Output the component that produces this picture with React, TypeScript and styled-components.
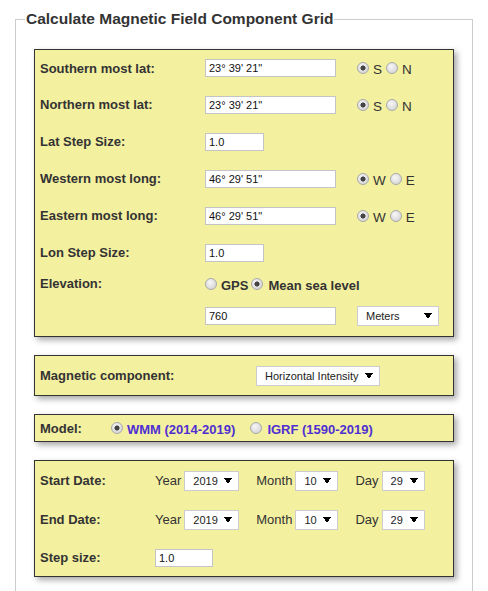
import React from "react";
import styled, { createGlobalStyle } from "styled-components";

const GlobalStyle = createGlobalStyle`
  html, body { margin: 0; padding: 0; background: #fff; }
  body {
    font-family: "Liberation Sans", Arial, Helvetica, sans-serif;
    font-size: 13px;
    color: #333;
  }
  * { box-sizing: border-box; }
`;

const Page = styled.div`
  padding: 10px 15px 0 15px;
`;

const Fieldset = styled.fieldset`
  margin: 0;
  min-width: 0;
  border: 1px solid #ccc;
  padding: 21px 18px 40px;
  display: flex;
  flex-direction: column;
  gap: 18px;
`;

const Legend = styled.legend`
  font-size: 15.5px;
  font-weight: bold;
  color: #333;
  line-height: 18px;
  padding: 0 1px;
  margin-left: -9px;
`;

const Panel = styled.div<{ $cols: string; $rows: string }>`
  background: #f3f0a0;
  border: 1px solid #333;
  box-shadow: 3px 3px 6px rgba(0, 0, 0, 0.35);
  padding: 0 5px;
  display: grid;
  grid-template-columns: ${(p) => p.$cols};
  grid-template-rows: ${(p) => p.$rows};
  align-items: center;
`;

const Label = styled.span`
  font-weight: bold;
  color: #333;
`;

const Cell = styled.div<{ $gap?: number; $span?: number }>`
  display: flex;
  align-items: center;
  gap: ${(p) => p.$gap ?? 4}px;
  grid-column: span ${(p) => p.$span ?? 1};
`;

const TextInput = styled.input<{ $w: number }>`
  width: ${(p) => p.$w}px;
  height: 18px;
  margin: 0;
  padding: 0 0 0 3px;
  border: 1px solid #c4c4c4;
  border-radius: 0;
  background: #fff;
  font: 11px "Liberation Sans", Arial, sans-serif;
  color: #111;
  outline: none;
`;

const Select = styled.select<{ $w: number }>`
  appearance: none;
  -webkit-appearance: none;
  width: ${(p) => p.$w}px;
  height: 20px;
  margin: 0;
  padding: 0 0 0 8px;
  border: 1px solid #ccc;
  border-radius: 0;
  font: 11px "Liberation Sans", Arial, sans-serif;
  color: #222;
  outline: none;
  background-color: #fff;
  background-image: linear-gradient(to bottom left, #000 50%, transparent 50%),
    linear-gradient(to bottom right, #000 50%, transparent 50%);
  background-size: 4px 6px, 4px 6px;
  background-repeat: no-repeat;
  background-position: right 10px center, right 6px center;
`;

const Radio = styled.input.attrs({ type: "radio" })`
  appearance: none;
  -webkit-appearance: none;
  flex: none;
  width: 12px;
  height: 12px;
  margin: 0;
  border-radius: 50%;
  border: 1px solid #a9a9a9;
  background: radial-gradient(circle at 40% 35%, #f7f7f7, #cdcdcd);
  &:checked {
    background: radial-gradient(circle, #444 0 2.2px, transparent 2.9px),
      radial-gradient(circle at 40% 35%, #f7f7f7, #cdcdcd);
  }
`;

const Choice = styled.label<{ $bold?: boolean; $color?: string; $gap?: number }>`
  display: inline-flex;
  align-items: center;
  gap: ${(p) => p.$gap ?? 4}px;
  font-weight: ${(p) => (p.$bold ? "bold" : "normal")};
  color: ${(p) => p.$color ?? "#333"};
  font-size: ${(p) => (p.$bold ? 13 : 13.5)}px;
  white-space: nowrap;
`;

const ChoiceText = styled.span`
  padding-top: 3px;
`;

const DateGroup = styled.div`
  display: flex;
  align-items: center;
  gap: 3px;
`;

const DateRow = styled.div`
  display: flex;
  align-items: center;
  gap: 17px;
`;

const ModelPanel = styled.div`
  background: #f3f0a0;
  border: 1px solid #333;
  box-shadow: 3px 3px 6px rgba(0, 0, 0, 0.35);
  height: 28px;
  padding: 0 5px;
  display: flex;
  align-items: center;
`;

const ModelLabel = styled(Label)`
  width: 71px;
`;

const ModelChoices = styled.div`
  display: flex;
  align-items: center;
  gap: 15px;
`;

const Hemisphere = ({ name, a, b }: { name: string; a: string; b: string }) => (
  <Cell $gap={4}>
    <Choice>
      <Radio name={name} defaultChecked />
      <ChoiceText>{a}</ChoiceText>
    </Choice>
    <Choice>
      <Radio name={name} />
      <ChoiceText>{b}</ChoiceText>
    </Choice>
  </Cell>
);

const DateFields = ({ id }: { id: string }) => (
  <DateRow>
    <DateGroup>
      <span>Year</span>
      <Select $w={55} defaultValue="2019" aria-label={`${id} year`}>
        <option>2019</option>
      </Select>
    </DateGroup>
    <DateGroup>
      <span>Month</span>
      <Select $w={43} defaultValue="10" aria-label={`${id} month`}>
        <option>10</option>
      </Select>
    </DateGroup>
    <DateGroup>
      <span>Day</span>
      <Select $w={43} defaultValue="29" aria-label={`${id} day`}>
        <option>29</option>
      </Select>
    </DateGroup>
  </DateRow>
);

export default function App() {
  return (
    <Page>
      <GlobalStyle />
      <Fieldset>
        <Legend>Calculate Magnetic Field Component Grid</Legend>

        <Panel $cols="165px 152px 1fr" $rows="36px 37px 37px 37px 37px 37px 25px 40px">
          <Label>Southern most lat:</Label>
          <TextInput $w={131} defaultValue={`23° 39' 21"`} />
          <Hemisphere name="slat" a="S" b="N" />

          <Label>Northern most lat:</Label>
          <TextInput $w={131} defaultValue={`23° 39' 21"`} />
          <Hemisphere name="nlat" a="S" b="N" />

          <Label>Lat Step Size:</Label>
          <TextInput $w={59} defaultValue="1.0" />
          <span />

          <Label>Western most long:</Label>
          <TextInput $w={131} defaultValue={`46° 29' 51"`} />
          <Hemisphere name="wlon" a="W" b="E" />

          <Label>Eastern most long:</Label>
          <TextInput $w={131} defaultValue={`46° 29' 51"`} />
          <Hemisphere name="elon" a="W" b="E" />

          <Label>Lon Step Size:</Label>
          <TextInput $w={59} defaultValue="1.0" />
          <span />

          <Label>Elevation:</Label>
          <Cell $gap={3} $span={2}>
            <Choice $bold>
              <Radio name="elev" />
              <ChoiceText>GPS</ChoiceText>
            </Choice>
            <Choice $bold $gap={5}>
              <Radio name="elev" defaultChecked />
              <ChoiceText>Mean sea level</ChoiceText>
            </Choice>
          </Cell>

          <span />
          <TextInput $w={131} defaultValue="760" />
          <Select $w={82} defaultValue="Meters" aria-label="units">
            <option>Meters</option>
          </Select>
        </Panel>

        <Panel $cols="216px 1fr" $rows="39px">
          <Label>Magnetic component:</Label>
          <Select $w={124} defaultValue="Horizontal Intensity" aria-label="component">
            <option>Horizontal Intensity</option>
          </Select>
        </Panel>

        <ModelPanel>
          <ModelLabel>Model:</ModelLabel>
          <ModelChoices>
            <Choice $bold $color="#4f2fd2">
              <Radio name="model" defaultChecked />
              <ChoiceText>WMM (2014-2019)</ChoiceText>
            </Choice>
            <Choice $bold $color="#4f2fd2" $gap={5}>
              <Radio name="model" />
              <ChoiceText>IGRF (1590-2019)</ChoiceText>
            </Choice>
          </ModelChoices>
        </ModelPanel>

        <Panel $cols="115px 1fr" $rows="39px 39px 37px">
          <Label>Start Date:</Label>
          <DateFields id="start" />
          <Label>End Date:</Label>
          <DateFields id="end" />
          <Label>Step size:</Label>
          <TextInput $w={58} defaultValue="1.0" />
        </Panel>
      </Fieldset>
    </Page>
  );
}
